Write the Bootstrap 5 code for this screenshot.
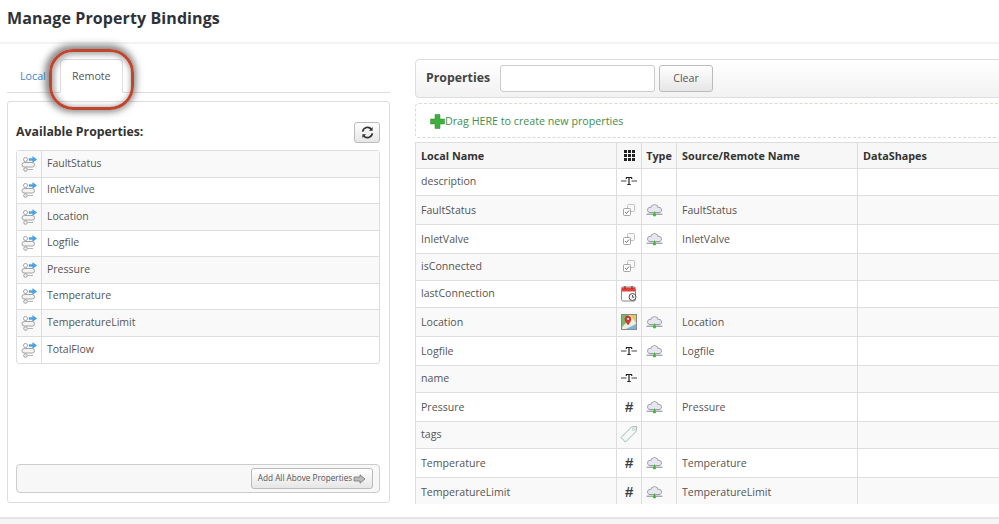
<!DOCTYPE html>
<html lang="en">
<head>
<meta charset="utf-8">
<title>Manage Property Bindings</title>
<link href="https://cdn.jsdelivr.net/npm/bootstrap@5.3.0/dist/css/bootstrap.min.css" rel="stylesheet">
<style>
html,body{height:524px;overflow:hidden}
body{font-family:"Open Sans","Liberation Sans",sans-serif;font-size:11px;color:#444;background:#fff}
.pg-head{height:44px;border-bottom:2px solid #f3f3f3;padding:8px 7px 0}
.pg-head h1{font-size:16px;font-weight:700;color:#2d3338;margin:0;line-height:20px;letter-spacing:.1px}
.pg-main{height:473px;position:relative}
.pane-l{width:383px;margin-left:7px;height:459px;flex:none}
.pane-r{width:600px;margin-left:25px;height:445px;flex:none;overflow:hidden;margin-top:15px}
.tabbar{height:49px;border-bottom:1px solid #ddd;padding-top:15px;margin-bottom:8px}
.tabbar .nav-link{font-size:10.7px;padding:0 12px;height:34px;line-height:33px;border:1px solid transparent;border-radius:4px 4px 0 0;color:#3a87c8}
.tabbar .nav-item:first-child .nav-link{padding-right:13px}
.tabbar .nav-link.active{color:#555;background:#fff;border-color:#ddd #ddd #fff;width:63px;text-align:center;padding:0}
.avail{height:402px;border:1px solid #ddd;border-radius:3px;padding:8px 9px 9px 8px}
.avail h2{font-size:12.3px;font-weight:700;color:#333;margin:0;line-height:20px;padding-top:12px}
.refresh{width:26px;height:21px;padding:0;margin-top:12px;background:linear-gradient(#fff,#e6e6e6);border:1px solid #bbb;border-radius:3px;display:flex;align-items:center;justify-content:center}
.plist{border:1px solid #ddd;border-radius:3px;margin-top:7px}
.pitem{height:26.5px;border-bottom:1px solid #ddd;display:flex;align-items:center;color:#555;font-size:10.5px}
.pitem:last-child{border-bottom:0}
.pitem:nth-child(odd){background:#f9f9f9}
.pitem .ic{width:25px;height:100%;border-right:1px solid #ddd;display:flex;align-items:center;justify-content:center;flex:none}
.pitem .tx{padding-left:5px}
.addbar{height:29px;margin-top:auto;border:1px solid #ccc;border-radius:4px;background:#f7f7f7;padding:3px 6px 3px 0}
.addbtn{height:21px;width:122px;padding:0;font-size:8.2px;color:#555;background:linear-gradient(#fff,#e6e6e6);border:1px solid #bbb;border-radius:3px;display:flex;align-items:center;justify-content:center;gap:1px;white-space:nowrap}
.tools{height:39px;border:1px solid #ddd;border-radius:4px;background:linear-gradient(#fff,#f2f2f2);padding:0 0 0 10px}
.tools b{font-size:12.3px;color:#444;width:74px;font-weight:700}
.tools .form-control{width:155px;height:27px;border:1px solid #ccc;border-radius:3px;background:#fff;padding:0 6px;box-shadow:none}
.clearbtn{width:54px;height:27px;margin-left:4px;padding:0;font-size:10.6px;color:#555;background:linear-gradient(#fff,#e6e6e6);border:1px solid #bbb;border-radius:3px}
.drop{height:35px;margin-top:5px;border:1px dashed #cfe3c4;border-radius:4px;padding:1px 0 0 14px;color:#3f8f4b;font-size:10.7px;display:flex;align-items:center}
.ptab{width:600px;margin-top:4px;table-layout:fixed;border-collapse:collapse;color:#555;font-size:10.6px;margin-bottom:0}
.ptab th,.ptab td{border:1px solid #ddd;padding:0 5px;vertical-align:middle;line-height:14px;box-shadow:none;color:#555;background:transparent}
.ptab th{height:26px;font-weight:700;color:#333;background:#f7f7f7;font-size:10.8px;white-space:nowrap}
.ptab td{height:29px}
.ptab tr.shrt td{height:27px;padding-bottom:2px}
.ptab tbody tr:nth-child(even) td{background:#f9f9f9}
.ptab .cc{padding:0;text-align:center}
.ptab svg{display:block;margin:auto}
.ptab svg.cloud-ic{margin:0 0 0 4px}
.hash{font-size:15px;font-weight:700;font-style:italic;font-family:"Liberation Sans",sans-serif}
.ptab td.hash{color:#3c3c3c}
.callout{position:absolute;left:49px;top:5px;width:85px;height:61px;border:3px solid #c1452c;border-radius:24px;box-shadow:-1px -1px 7px 3px rgba(80,80,80,.7),inset 1px 1px 5px 2px rgba(80,80,80,.45);pointer-events:none}
.pg-foot{height:7px;border-top:2px solid #e6e6e6;background:#f5f5f5}
</style>
</head>
<body>
<svg width="0" height="0" class="position-absolute">
<defs>
<symbol id="i-remote" viewBox="0 0 16 16">
<circle cx="4.500" cy="3.500" r="2" fill="#fff" stroke="#999" stroke-width=".9"/>
<rect x="1" y="6.500" width="12.500" height="4.500" rx="2.200" fill="#f4f4f4" stroke="#999" stroke-width=".9"/>
<circle cx="4.500" cy="13.500" r="1.800" fill="#eee" stroke="#999" stroke-width=".9"/>
<path d="M7 13.500h5" stroke="#aaa" stroke-width=".9"/>
<path d="M8 2.400h3.600V.6L15.800 3.500l-4.200 2.900V4.600H8z" fill="#45a4e6" stroke="#2f86c6" stroke-width=".3"/>
</symbol>
<symbol id="i-bool" viewBox="0 0 14 14">
<rect x="5.500" y="1.500" width="7" height="7" rx="1" fill="#f8f8f8" stroke="#bbb" stroke-width=".9"/>
<rect x="1.500" y="5.500" width="7" height="7" rx="1" fill="#fff" stroke="#999" stroke-width=".9"/>
<path d="M3 9l1.500 1.500L7 7.500" fill="none" stroke="#666" stroke-width=".9"/>
</symbol>
<symbol id="i-text" viewBox="0 0 16 10">
<path d="M0 5h5.500M10.500 5H16" stroke="#444"/>
<path d="M5 1.500h6M5.300 1.500v1.500M10.700 1.500v1.500M8 1.500v7M6.300 8.500h3.400" fill="none" stroke="#222" stroke-width="1.200"/>
</symbol>
<symbol id="i-cloud" viewBox="0 0 16 12">
<g fill="#e2e2ec" stroke="#8f8f9e" stroke-width=".9"><circle cx="4" cy="5.500" r="2.500"/><circle cx="8" cy="4" r="3.500"/><circle cx="12" cy="5.500" r="2.500"/></g>
<g fill="#e6e6ef"><circle cx="4" cy="5.500" r="2"/><circle cx="8" cy="4" r="3"/><circle cx="12" cy="5.500" r="2"/><rect x="4" y="4" width="8" height="3.500"/></g>
<path d="M.5 9.500h15" stroke="#8a8a94"/>
<path d="M4 8h8" stroke="#8f8f9e" stroke-width=".9"/>
<path d="M8 7v3" stroke="#3fae3f"/>
<circle cx="8" cy="10" r="1.600" fill="#3fbb3f"/>
</symbol>
<symbol id="i-cal" viewBox="0 0 16 17">
<rect x=".5" y="2" width="14" height="14" rx="1.500" fill="#fff" stroke="#888"/>
<rect x="1" y="2.500" width="13" height="4" fill="#e0403a"/>
<path d="M4 1v3M11 1v3" stroke="#833" stroke-width="1.200"/>
<circle cx="11.500" cy="12" r="3.500" fill="#eee" stroke="#555"/>
<path d="M11.500 10v2.200h1.600" fill="none" stroke="#333" stroke-width=".8"/>
</symbol>
<symbol id="i-map" viewBox="0 0 16 16">
<rect x=".5" y=".5" width="15" height="15" fill="#eeeede" stroke="#888"/>
<path d="M1 1h7l-3 8-4 4z" fill="#7cb86a"/>
<path d="M9 1h6v8z" fill="#e6c75a"/>
<path d="M15 10v5H5z" fill="#73b6dc"/>
<path d="M7 11C4.500 7.500 4 6.500 4 5a3 3 0 0 1 6 0c0 1.500-.5 2.500-3 6z" fill="#d23a32" stroke="#922" stroke-width=".4"/>
<circle cx="7" cy="5" r="1" fill="#fff"/>
</symbol>
<symbol id="i-tag" viewBox="0 0 18 18">
<path d="M1 12.500 11.500 2l5-.5-.5 5L5.500 17z" fill="#f7faf8" stroke="#9db8ad"/>
<circle cx="13.500" cy="4.500" r="1" fill="#fff" stroke="#9db8ad" stroke-width=".7"/>
</symbol>
<symbol id="i-grid" viewBox="0 0 11 11">
<path fill="#222" d="M0 0h3v3H0zM4 0h3v3H4zM8 0h3v3H8zM0 4h3v3H0zM4 4h3v3H4zM8 4h3v3H8zM0 8h3v3H0zM4 8h3v3H4zM8 8h3v3H8z"/>
</symbol>
</defs>
</svg>

<header class="pg-head"><h1>Manage Property Bindings</h1></header>

<main class="pg-main d-flex">
  <section class="pane-l d-flex flex-column">
    <ul class="nav tabbar flex-nowrap">
      <li class="nav-item"><a class="nav-link" href="#">Local</a></li>
      <li class="nav-item"><a class="nav-link active" href="#">Remote</a></li>
    </ul>
    <div class="avail d-flex flex-column">
      <div class="d-flex justify-content-between align-items-start">
        <h2>Available Properties:</h2>
        <button class="refresh" type="button" aria-label="Refresh">
          <svg width="13" height="13" viewBox="0 0 14 14" fill="none" stroke="#333" stroke-width="1.800"><path d="M1.800 6A5.300 5.300 0 0 1 11.200 3.500M12.200 8A5.300 5.300 0 0 1 2.800 10.500"/><path d="M12.500 1v4h-4zM1.500 13V9h4z" fill="#333" stroke="none"/></svg>
        </button>
      </div>
      <div class="plist">
        <div class="pitem"><span class="ic"><svg width="16" height="16"><use href="#i-remote"/></svg></span><span class="tx">FaultStatus</span></div>
        <div class="pitem"><span class="ic"><svg width="16" height="16"><use href="#i-remote"/></svg></span><span class="tx">InletValve</span></div>
        <div class="pitem"><span class="ic"><svg width="16" height="16"><use href="#i-remote"/></svg></span><span class="tx">Location</span></div>
        <div class="pitem"><span class="ic"><svg width="16" height="16"><use href="#i-remote"/></svg></span><span class="tx">Logfile</span></div>
        <div class="pitem"><span class="ic"><svg width="16" height="16"><use href="#i-remote"/></svg></span><span class="tx">Pressure</span></div>
        <div class="pitem"><span class="ic"><svg width="16" height="16"><use href="#i-remote"/></svg></span><span class="tx">Temperature</span></div>
        <div class="pitem"><span class="ic"><svg width="16" height="16"><use href="#i-remote"/></svg></span><span class="tx">TemperatureLimit</span></div>
        <div class="pitem"><span class="ic"><svg width="16" height="16"><use href="#i-remote"/></svg></span><span class="tx">TotalFlow</span></div>
      </div>
      <div class="addbar d-flex justify-content-end">
        <button class="addbtn" type="button">Add All Above Properties
          <svg width="13" height="10" viewBox="0 0 12 10"><path d="M.5 3h6V.8L11.500 5l-5 4.200V7h-6z" fill="#bbb" stroke="#777" stroke-width=".8"/></svg>
        </button>
      </div>
    </div>
  </section>

  <section class="pane-r">
    <div class="tools d-flex align-items-center">
      <b>Properties</b>
      <input class="form-control" type="text" aria-label="Properties">
      <button class="clearbtn" type="button">Clear</button>
    </div>
    <div class="drop">
      <svg width="15" height="15" viewBox="0 0 15 15"><path d="M5 .5h5v4.500h4.500v5H10v4.500H5V10H.5V5H5z" fill="#3fae3f" stroke="#2f8f2f" stroke-width=".5"/></svg>
      <span>Drag HERE to create new properties</span>
    </div>
    <table class="table ptab">
      <colgroup><col style="width:201px"><col style="width:25px"><col style="width:35px"><col style="width:181px"><col style="width:158px"></colgroup>
      <thead><tr><th>Local Name</th><th class="cc"><svg width="11" height="11"><use href="#i-grid"/></svg></th><th class="cc">Type</th><th>Source/Remote Name</th><th>DataShapes</th></tr></thead>
      <tbody>
        <tr class="shrt"><td>description</td><td class="cc"><svg width="16" height="10"><use href="#i-text"/></svg></td><td></td><td></td><td></td></tr>
        <tr><td>FaultStatus</td><td class="cc"><svg width="14" height="14"><use href="#i-bool"/></svg></td><td class="cc"><svg class="cloud-ic" width="17" height="13"><use href="#i-cloud"/></svg></td><td>FaultStatus</td><td></td></tr>
        <tr><td>InletValve</td><td class="cc"><svg width="14" height="14"><use href="#i-bool"/></svg></td><td class="cc"><svg class="cloud-ic" width="17" height="13"><use href="#i-cloud"/></svg></td><td>InletValve</td><td></td></tr>
        <tr class="shrt"><td>isConnected</td><td class="cc"><svg width="14" height="14"><use href="#i-bool"/></svg></td><td></td><td></td><td></td></tr>
        <tr class="shrt"><td>lastConnection</td><td class="cc"><svg width="16" height="17"><use href="#i-cal"/></svg></td><td></td><td></td><td></td></tr>
        <tr><td>Location</td><td class="cc"><svg width="16" height="16"><use href="#i-map"/></svg></td><td class="cc"><svg class="cloud-ic" width="17" height="13"><use href="#i-cloud"/></svg></td><td>Location</td><td></td></tr>
        <tr><td>Logfile</td><td class="cc"><svg width="16" height="10"><use href="#i-text"/></svg></td><td class="cc"><svg class="cloud-ic" width="17" height="13"><use href="#i-cloud"/></svg></td><td>Logfile</td><td></td></tr>
        <tr class="shrt"><td>name</td><td class="cc"><svg width="16" height="10"><use href="#i-text"/></svg></td><td></td><td></td><td></td></tr>
        <tr><td>Pressure</td><td class="cc hash">#</td><td class="cc"><svg class="cloud-ic" width="17" height="13"><use href="#i-cloud"/></svg></td><td>Pressure</td><td></td></tr>
        <tr class="shrt"><td>tags</td><td class="cc"><svg width="18" height="18"><use href="#i-tag"/></svg></td><td></td><td></td><td></td></tr>
        <tr><td>Temperature</td><td class="cc hash">#</td><td class="cc"><svg class="cloud-ic" width="17" height="13"><use href="#i-cloud"/></svg></td><td>Temperature</td><td></td></tr>
        <tr><td>TemperatureLimit</td><td class="cc hash">#</td><td class="cc"><svg class="cloud-ic" width="17" height="13"><use href="#i-cloud"/></svg></td><td>TemperatureLimit</td><td></td></tr>
      </tbody>
    </table>
  </section>
  <div class="callout"></div>
</main>
<footer class="pg-foot"></footer>
</body>
</html>
